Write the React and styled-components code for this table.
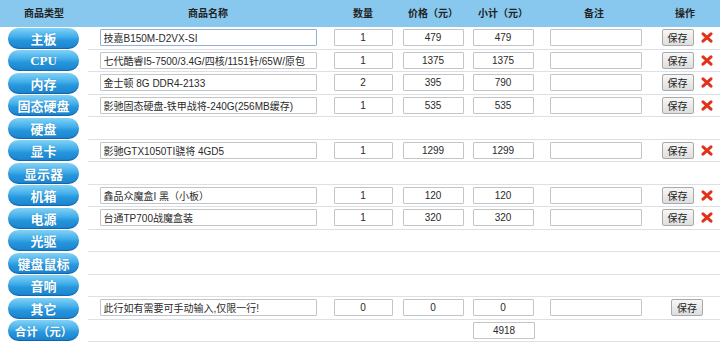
import React from "react";
import styled, { createGlobalStyle } from "styled-components";

const GlobalStyle = createGlobalStyle`
  html, body {
    margin: 0;
    padding: 0;
    background: #fff;
    font-family: "Liberation Sans", "Noto Sans CJK SC", sans-serif;
  }
`;

const COLS = "88px 240px 70px 70px 70px 112px 70px";

const items = [
  { type: "主板", name: "技嘉B150M-D2VX-SI", qty: 1, price: 479, sub: 479, focus: true },
  { type: "CPU", name: "七代酷睿I5-7500/3.4G/四核/1151针/65W/原包", qty: 1, price: 1375, sub: 1375 },
  { type: "内存", name: "金士顿 8G DDR4-2133", qty: 2, price: 395, sub: 790 },
  { type: "固态硬盘", name: "影驰固态硬盘-铁甲战将-240G(256MB缓存)", qty: 1, price: 535, sub: 535 },
  { type: "硬盘" },
  { type: "显卡", name: "影驰GTX1050TI骁将 4GD5", qty: 1, price: 1299, sub: 1299 },
  { type: "显示器" },
  { type: "机箱", name: "鑫品众魔盒I 黑（小板）", qty: 1, price: 120, sub: 120 },
  { type: "电源", name: "台通TP700战魔盒装", qty: 1, price: 320, sub: 320 },
  { type: "光驱" },
  { type: "键盘鼠标" },
  { type: "音响" },
  { type: "其它", name: "此行如有需要可手动输入,仅限一行!", qty: 0, price: 0, sub: 0, other: true },
];

const headers = ["商品类型", "商品名称", "数量", "价格（元）", "小计（元）", "备注", "操作"];

const Table = styled.div`
  width: 720px;
`;

const HeadRow = styled.div`
  display: grid;
  grid-template-columns: ${COLS};
  height: 27px;
  background: #88c8ee;
`;

const HeadCell = styled.div`
  display: flex;
  align-items: center;
  justify-content: center;
  padding-bottom: 2px;
  font-size: 10px;
  font-weight: 700;
  color: #222;
`;

const Row = styled.div`
  display: grid;
  grid-template-columns: ${COLS};
  height: 22.5px;
`;

const TypeCell = styled.div`
  display: flex;
  align-items: center;
  padding-left: 8px;
`;

const Cell = styled.div`
  display: flex;
  align-items: center;
  justify-content: center;
  border-bottom: 1px solid #d9e0e8;
  box-sizing: border-box;
  padding-left: ${(p) => p.$shift || 0}px;
`;

const Pill = styled.div`
  width: 71px;
  height: 21px;
  border-radius: 11px;
  display: flex;
  align-items: center;
  justify-content: center;
  background: linear-gradient(to bottom, #82d2f6 0%, #45b0ea 40%, #2596dc 60%, #1b82cd 100%);
  box-shadow: inset 0 -1px 1px rgba(0, 40, 110, 0.35);
  color: #fff;
  font-family: "Liberation Serif", "Noto Sans CJK SC", serif;
  font-size: ${(p) => (p.$compact ? 11.5 : 13)}px;
  font-weight: 700;
  white-space: nowrap;
  text-shadow: 0 0 1px rgba(0, 60, 120, 0.4);
`;

const Field = styled.input`
  box-sizing: border-box;
  width: ${(p) => p.$w}px;
  height: 17px;
  padding: 0 3px;
  border: 1px solid ${(p) => (p.$focus ? "#90b0d8" : "#c4c4c4")};
  border-radius: 1px;
  background: #fff;
  font-family: "Liberation Sans", "Noto Sans CJK SC", sans-serif;
  font-size: 10px;
  color: #2a2a2a;
  text-align: ${(p) => (p.$left ? "left" : "center")};
  outline: none;
`;

const SaveButton = styled.button`
  width: 32px;
  height: 17px;
  padding: 0;
  border: 1px solid #a9a9a9;
  border-radius: 2px;
  background: linear-gradient(to bottom, #f7f7f7, #dedede);
  font-family: "Noto Sans CJK SC", sans-serif;
  font-size: 10px;
  color: #222;
`;

const Ops = styled.div`
  display: flex;
  align-items: center;
  gap: 7px;
`;

const DelIcon = () => (
  <svg width="12" height="11" viewBox="0 0 12 11">
    <path d="M2 1.8 L10 9.2 M10 1.8 L2 9.2" stroke="#e2321c" strokeWidth="3" strokeLinecap="round" />
  </svg>
);

const ItemRow = ({ item }) => {
  const has = item.name !== undefined;
  return (
    <Row>
      <TypeCell>
        <Pill>{item.type}</Pill>
      </TypeCell>
      <Cell>{has && <Field $w={217} $left $focus={item.focus} defaultValue={item.name} />}</Cell>
      <Cell>{has && <Field $w={59} defaultValue={item.qty} />}</Cell>
      <Cell>{has && <Field $w={61} defaultValue={item.price} />}</Cell>
      <Cell>{has && <Field $w={61} defaultValue={item.sub} />}</Cell>
      <Cell $shift={4}>{has && <Field $w={92} defaultValue="" />}</Cell>
      <Cell $shift={4}>
        {has &&
          (item.other ? (
            <SaveButton>保存</SaveButton>
          ) : (
            <Ops>
              <SaveButton>保存</SaveButton>
              <DelIcon />
            </Ops>
          ))}
      </Cell>
    </Row>
  );
};

export default function App() {
  return (
    <>
      <GlobalStyle />
      <Table>
        <HeadRow>
          {headers.map((h) => (
            <HeadCell key={h}>{h}</HeadCell>
          ))}
        </HeadRow>
        {items.map((item) => (
          <ItemRow key={item.type} item={item} />
        ))}
        <Row>
          <TypeCell>
            <Pill $compact>合计（元）</Pill>
          </TypeCell>
          <Cell />
          <Cell />
          <Cell />
          <Cell $shift={2}>
            <Field $w={62} defaultValue={4918} />
          </Cell>
          <Cell />
          <Cell />
        </Row>
      </Table>
    </>
  );
}
